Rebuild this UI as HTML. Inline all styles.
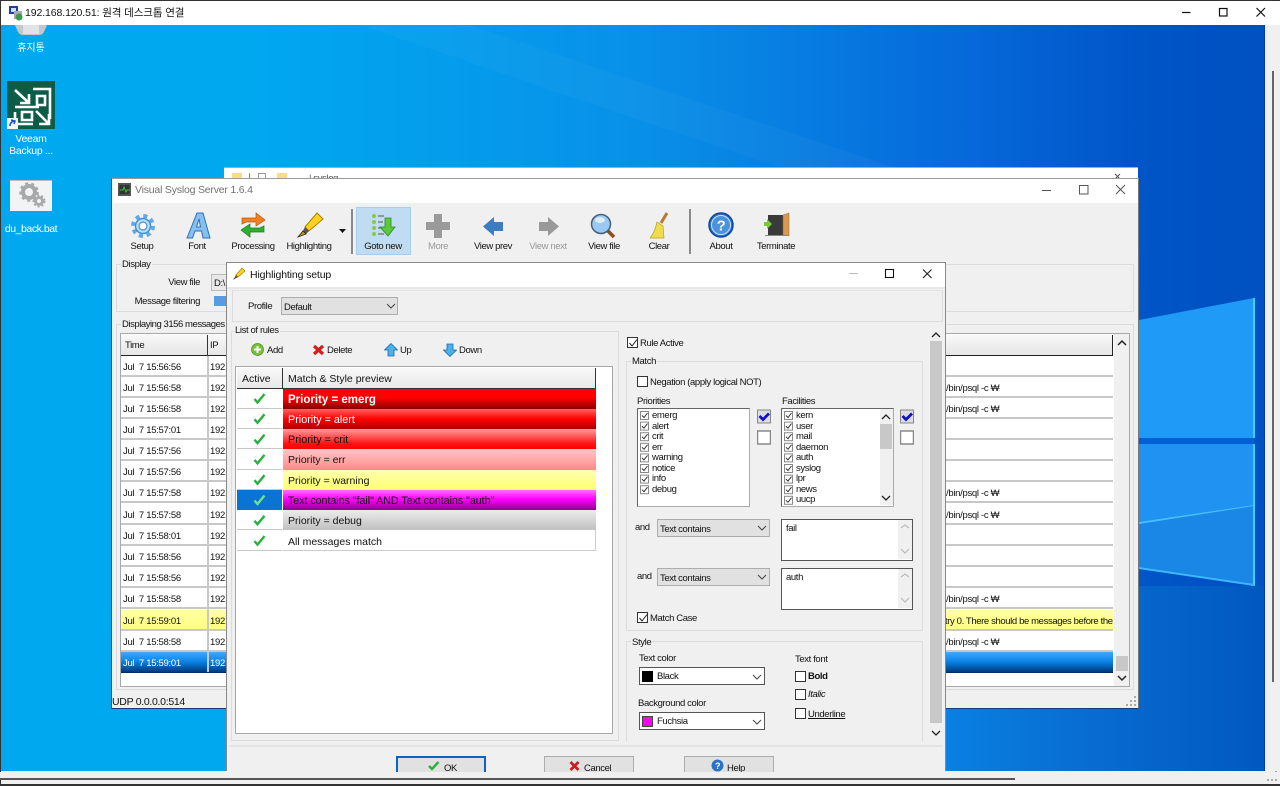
<!DOCTYPE html>
<html><head><meta charset="utf-8"><style>
html,body{margin:0;padding:0;width:1280px;height:786px;overflow:hidden;background:#0880e0}
body{position:relative;font:9.5px/12px "Liberation Sans","Noto Sans CJK KR",sans-serif;letter-spacing:-.38px;color:#111}
div,svg{position:absolute;box-sizing:border-box}
.t{position:absolute;white-space:nowrap;height:12px;margin-top:2px}
.c{transform:translateX(-50%)}
.g{border:1px solid #dcdcdc}
.lb{position:absolute;background:#f0f0f0;padding:0 1px;white-space:nowrap;height:12px}
.r{left:121px;width:992px;height:21.1px;background:#fff;border-bottom:2px solid #c8c8c8;letter-spacing:-.3px}
.cb{width:11px;height:11px;border:1px solid #333;background:#fff}
.sel{background:#e1e1e1;border:1px solid #adadad}
.rr{left:283px;width:313px;height:20.3px;padding:5px 0 0 5px;font-size:10.5px;white-space:nowrap;line-height:12px;letter-spacing:0}
.ch{width:45px;left:237px;height:20.3px;background:#fff;border-bottom:1px solid #c8c8c8}
.btn{top:756px;width:90px;height:16px;background:#e1e1e1;border:1px solid #adadad;border-bottom:0}
</style></head><body>

<svg style="left:0;top:0" width="1280" height="786">
<defs><linearGradient id="bg" x1="0" y1="0" x2="1" y2="0"><stop offset="0" stop-color="#00a8f0"/><stop offset=".2" stop-color="#00a8f0"/><stop offset=".5" stop-color="#0890e8"/><stop offset=".76" stop-color="#0668da"/><stop offset=".9" stop-color="#0054c6"/><stop offset="1" stop-color="#0050c0"/></linearGradient>
<linearGradient id="bg3" x1="0" y1="0" x2="1" y2="0"><stop offset="0" stop-color="#0a80e2"/><stop offset=".6" stop-color="#0666cc"/><stop offset="1" stop-color="#0058c0"/></linearGradient></defs>
<rect width="1280" height="786" fill="url(#bg)"/>
<rect x="946" y="586" width="320" height="190" fill="url(#bg3)"/>
<polygon points="360,25 470,25 1140,250 1140,290" fill="#fff" opacity=".03"/>
<polygon points="1139,320 1254,298 1254,438 1139,438" fill="#1f9af6"/>
<polygon points="1139,444 1254,444 1254,505 1139,522" fill="#1f92f2"/>
<polygon points="1139,522 1254,505 1254,585 1139,568" fill="#1a86e6"/>
<polygon points="1139,522 1254,505 1254,506 1139,524" fill="#48c0ff"/>
<polygon points="1139,438 1254,438 1254,444 1139,444" fill="#0060d4"/>
<rect x="1253" y="298" width="2" height="140" fill="#3cd0ff"/>
<rect x="1253" y="444" width="2" height="142" fill="#3cd0ff"/>
<polygon points="1139,567 1254,584 1254,586 1139,569" fill="#3cb8ff"/>
</svg>

<!-- remote desktop chrome -->
<div style="left:0;top:0;width:1280px;height:25px;background:#fff;border-top:1px solid #333"></div>
<svg style="left:8px;top:5px" width="16" height="16"><rect x="1" y="1" width="9" height="8" fill="#1c3fa8"/><rect x="3" y="3" width="5" height="4" fill="#cfe0ff"/><rect x="6" y="6" width="8" height="8" fill="#aab" /><circle cx="11" cy="12" r="3.5" fill="#3a9a4a"/></svg>
<div class="t" style="left:25px;top:5px;font-size:10.5px;letter-spacing:-.1px">192.168.120.51: 원격 데스크톱 연결</div>
<svg style="left:1170px;top:4px" width="110" height="18" fill="none" stroke="#111" stroke-width="1.2"><path d="M12 8.500h8.500"/><rect x="49.500" y="4.500" width="7.500" height="7.500"/><path d="M86.500 4l8.500 8.500M95 4l-8.500 8.500"/></svg>
<div style="left:1265px;top:25px;width:15px;height:761px;background:#f0f0f0"></div>
<div style="left:1272px;top:71px;width:1.500px;height:611px;background:#666"></div>
<div style="left:0;top:771px;width:1280px;height:13px;background:#f0f0f0"></div>
<div style="left:0;top:784px;width:1280px;height:2px;background:#333"></div>
<div style="left:0;top:0;width:1px;height:786px;background:#333"></div>
<div style="left:1264px;top:25px;width:1px;height:746px;background:#0038b0"></div>

<!-- desktop icons -->
<svg style="left:14px;top:25px" width="34" height="12"><path d="M1 0h32l-3 7q-1 2-4 3H8q-3-1-4-3z" fill="#c4c8ce"/><path d="M9 0h16v9H9z" fill="#dfe2e6"/></svg>
<div class="t c" style="left:31px;top:41px;color:#fff;font-size:10px;letter-spacing:0">휴지통</div>
<svg style="left:7px;top:81px" width="49" height="49"><rect width="48" height="48" fill="#0d5c48"/><g fill="none" stroke="#fff" stroke-width="2.600"><path d="M8 9l14 13M22 13v9h-9"/><path d="M26 8h17v30"/><path d="M30 15h8v9h-8z"/><path d="M8 26h24"/><path d="M15 31h10v8H15z" /><path d="M8 31v12h18"/><path d="M29 30l13 13M42 33v10H32"/></g><rect x="0" y="37" width="11" height="11" fill="#f4f4f4"/><path d="M3 45q0-4 4-5M4 39l4 1-1 3" stroke="#1a50c0" fill="none" stroke-width="1.500"/></svg>
<div class="t c" style="left:31px;top:130.500px;color:#fff;font-size:10.5px;letter-spacing:-.3px">Veeam</div>
<div class="t c" style="left:31px;top:142.500px;color:#fff;font-size:10.5px;letter-spacing:-.3px">Backup ...</div>
<svg style="left:10px;top:180px" width="43" height="32"><rect width="42" height="31" fill="#f2f3f4"/><rect width="42" height="1" fill="#bbb"/><circle cx="19" cy="12" r="6" fill="none" stroke="#a8a8a8" stroke-width="4"/><circle cx="19" cy="12" r="8.500" fill="none" stroke="#a8a8a8" stroke-width="2.500" stroke-dasharray="3 3"/><circle cx="29" cy="21" r="3.500" fill="none" stroke="#aaa" stroke-width="3"/><circle cx="29" cy="21" r="5.500" fill="none" stroke="#aaa" stroke-width="2" stroke-dasharray="2 2"/></svg>
<div class="t c" style="left:31px;top:221px;color:#fff;font-size:10.5px;letter-spacing:-.45px">du_back.bat</div>

<!-- window behind -->
<div style="left:224px;top:167px;width:914px;height:12px;background:#fff;border-top:1px solid #aaa;overflow:hidden">
<div style="left:8px;top:5px;width:10px;height:9px;background:#f6dc8c"></div><div style="left:25px;top:5px;width:1px;height:9px;background:#888"></div><div style="left:34px;top:5px;width:8px;height:9px;border:1px solid #999"></div><div style="left:53px;top:5px;width:10px;height:9px;background:#f6dc8c"></div>
<div class="t" style="left:85px;top:3px;color:#555">| syslog</div></div>
<svg style="left:1113px;top:172px" width="12" height="7" stroke="#555" fill="none"><path d="M2 2l5 5M7 2L2 7"/></svg>

<!-- main window -->
<div style="left:111px;top:178px;width:1028px;height:531px;background:#f0f0f0;border:1px solid #9a9a9a;border-color:#9a9a9a #777 #1a3a80 #2a5a80"></div>
<div style="left:112px;top:179px;width:1026px;height:24px;background:#fff"></div>
<svg style="left:118px;top:183px" width="13" height="13"><rect width="13" height="13" fill="#555"/><rect x="1.500" y="2" width="10" height="9" fill="#333"/><path d="M2 7h3l1-3 2 5 1-2h3" stroke="#3c3" fill="none"/></svg>
<div class="t" style="left:135px;top:182px;color:#707070;font-size:10.5px;letter-spacing:-.2px">Visual Syslog Server 1.6.4</div>
<svg style="left:1040px;top:184px" width="95" height="12" fill="none" stroke="#555"><path d="M2 6.500h9"/><rect x="39.500" y="1.500" width="8.500" height="8.500"/><path d="M76 1l9 9M85 1l-9 9"/></svg>

<!-- toolbar -->
<div style="left:356px;top:207px;width:55px;height:48px;background:#c0dcf3;border:1px solid #a6cdee"></div>
<div style="left:351px;top:209px;width:1.500px;height:45px;background:#8a8a8a"></div>
<div style="left:689px;top:209px;width:1.500px;height:45px;background:#8a8a8a"></div>
<svg style="left:130px;top:213px" width="26" height="26"><circle cx="13" cy="13" r="7.500" fill="#bfe0fb" stroke="#3e8fd8" stroke-width="1.500"/><circle cx="13" cy="13" r="10" fill="none" stroke="#60a8e8" stroke-width="4" stroke-dasharray="4 3.850"/><circle cx="13" cy="13" r="4" fill="#fff" stroke="#3e8fd8" stroke-width="1.200"/></svg>
<svg style="left:186px;top:212px" width="25" height="27"><path d="M1 26L11 1h6l7 25h-7l-1.500-7H9l-2.500 7z M10.500 15h4L13 7z" fill="#86c0f0" fill-rule="evenodd" stroke="#2c72b8"/></svg>
<svg style="left:240px;top:212px" width="26" height="26"><path d="M2 12V6h14V1l9 7-9 6V10H6z" fill="#f08020" stroke="#b85a10" stroke-width=".7"/><path d="M24 14v6H10v5l-9-7 9-6v4h10z" fill="#2cb030" stroke="#1a7a20" stroke-width=".7"/></svg>
<svg style="left:296px;top:212px" width="28" height="27"><path d="M9 15L21 1l6 6-14 12z" fill="#ffd21e" stroke="#a88000"/><path d="M9 15l4 4-3 3-3-3z" fill="#555"/><path d="M7 19l3 3-8 3z" fill="#c89a10" stroke="#222" stroke-width=".8"/></svg>
<svg style="left:339px;top:229px" width="8" height="5"><path d="M0 0h7L3.500 4z" fill="#111"/></svg>
<svg style="left:371px;top:213px" width="26" height="26"><g fill="#8cc850"><circle cx="3" cy="3" r="2"/><circle cx="3" cy="9" r="2"/><circle cx="3" cy="15" r="2"/><circle cx="3" cy="21" r="2"/></g><path d="M7 3h6M7 9h5M7 15h4M7 21h6" stroke="#555"/><path d="M14 5h6v9h4l-7 9-8-9h5z" fill="#5cc83c" stroke="#2a8a20" stroke-width=".8"/></svg>
<svg style="left:425px;top:213px" width="26" height="26"><path d="M9 1h8v8h8v8h-8v8H9v-8H1V9h8z" fill="#9a9a9a"/></svg>
<svg style="left:483px;top:217px" width="21" height="20"><path d="M0 9.500L11 0v5h9v9h-9v5z" fill="#3c7cc0"/></svg>
<svg style="left:539px;top:217px" width="21" height="20"><path d="M20 9.500L9 0v5H0v9h9v5z" fill="#999"/></svg>
<svg style="left:590px;top:213px" width="28" height="26"><path d="M17 17l7 7" stroke="#8a5020" stroke-width="3.500"/><circle cx="11" cy="11" r="9.500" fill="#9cc8f4" stroke="#44607a" stroke-width="1.500"/><ellipse cx="10" cy="7" rx="5" ry="3" fill="#dcecfc"/></svg>
<svg style="left:648px;top:212px" width="22" height="27"><path d="M19 1l-6 10" stroke="#b87830" stroke-width="3"/><path d="M9 10l6 4 1 12H2q5-6 7-16z" fill="#f0dc50" stroke="#b8a020" stroke-width=".7"/></svg>
<svg style="left:708px;top:212px" width="26" height="26"><circle cx="13" cy="13" r="12" fill="#2a72c8" stroke="#0e4a98" stroke-width="1.500"/><circle cx="13" cy="13" r="9.500" fill="#4a92dc" stroke="#cfe4f8"/><text x="13" y="18.500" font-size="15" font-weight="bold" font-family="Liberation Sans" fill="#fff" text-anchor="middle">?</text></svg>
<svg style="left:764px;top:212px" width="26" height="26"><rect x="4" y="3" width="19" height="20" fill="#3a3a3a"/><path d="M19 3l6-2v23l-6-1z" fill="#d89850" stroke="#9a6a30" stroke-width=".5"/><rect x="1" y="23" width="22" height="1" fill="#888"/><path d="M0 10h3V7l5 5-5 5v-3H0z" fill="#7ccc30"/></svg>

<div class="t c" style="left:142px;top:239px">Setup</div>
<div class="t c" style="left:197px;top:239px">Font</div>
<div class="t c" style="left:253px;top:239px">Processing</div>
<div class="t c" style="left:309px;top:239px">Highlighting</div>
<div class="t c" style="left:383px;top:239px">Goto new</div>
<div class="t c" style="left:438px;top:239px;color:#999">More</div>
<div class="t c" style="left:493px;top:239px">View prev</div>
<div class="t c" style="left:548px;top:239px;color:#999">View next</div>
<div class="t c" style="left:604px;top:239px">View file</div>
<div class="t c" style="left:659px;top:239px">Clear</div>
<div class="t c" style="left:721px;top:239px">About</div>
<div class="t c" style="left:776px;top:239px">Terminate</div>

<!-- display group -->
<div class="g" style="left:116px;top:264px;width:1018px;height:48px"></div>
<div class="lb" style="left:121px;top:258.500px">Display</div>
<div class="t" style="right:1080px;top:275px">View file</div>
<div class="t" style="right:1080px;top:294px">Message filtering</div>
<div style="left:211px;top:274px;width:30px;height:17px;background:#e8e8e8;border:1px solid #bbb;padding:3px 0 0 2px">D:\</div>
<div style="left:214px;top:296px;width:12px;height:10px;background:#5a9ae0"></div>

<!-- messages group -->
<div class="g" style="left:116px;top:324px;width:1018px;height:366px"></div>
<div class="lb" style="left:121px;top:318.500px;letter-spacing:-.45px">Displaying 3156 messages</div>
<div style="left:120px;top:333px;width:1010px;height:354px;background:#fff;border:1px solid #a8a8a8"></div>
<div style="left:121px;top:335px;width:992px;height:21px;background:linear-gradient(#f8f8f8,#e6e6e6);border-bottom:1.500px solid #222;border-right:1px solid #222"></div>
<div style="left:207px;top:335px;width:1px;height:21px;background:#333"></div>
<div class="t" style="left:125px;top:338px">Time</div>
<div class="t" style="left:210px;top:338px">IP</div>
<div style="left:1114px;top:334px;width:15px;height:352px;background:#f0f0f0"></div>
<div style="left:1116px;top:656px;width:12px;height:15px;background:#c8c8c8"></div>
<svg style="left:1116px;top:339px" width="12" height="8"><path d="M2 6l4-4 4 4" fill="none" stroke="#222" stroke-width="1.500"/></svg>
<svg style="left:1116px;top:674px" width="12" height="8"><path d="M2 2l4 4 4-4" fill="none" stroke="#222" stroke-width="1.500"/></svg>

<div class="r" style="top:356px"><div class="t" style="left:2px;top:4px">Jul&nbsp; 7 15:56:56</div><div class="t" style="left:89px;top:4px">192.</div></div>
<div class="r" style="top:377px"><div class="t" style="left:2px;top:4px">Jul&nbsp; 7 15:56:58</div><div class="t" style="left:89px;top:4px">192.</div><div class="t" style="left:825px;top:4px">/bin/psql -c ₩</div></div>
<div class="r" style="top:398px"><div class="t" style="left:2px;top:4px">Jul&nbsp; 7 15:56:58</div><div class="t" style="left:89px;top:4px">192.</div><div class="t" style="left:825px;top:4px">/bin/psql -c ₩</div></div>
<div class="r" style="top:419px"><div class="t" style="left:2px;top:4px">Jul&nbsp; 7 15:57:01</div><div class="t" style="left:89px;top:4px">192.</div></div>
<div class="r" style="top:440px"><div class="t" style="left:2px;top:4px">Jul&nbsp; 7 15:57:56</div><div class="t" style="left:89px;top:4px">192.</div></div>
<div class="r" style="top:461px"><div class="t" style="left:2px;top:4px">Jul&nbsp; 7 15:57:56</div><div class="t" style="left:89px;top:4px">192.</div></div>
<div class="r" style="top:482px"><div class="t" style="left:2px;top:4px">Jul&nbsp; 7 15:57:58</div><div class="t" style="left:89px;top:4px">192.</div><div class="t" style="left:825px;top:4px">/bin/psql -c ₩</div></div>
<div class="r" style="top:503.500px"><div class="t" style="left:2px;top:4px">Jul&nbsp; 7 15:57:58</div><div class="t" style="left:89px;top:4px">192.</div><div class="t" style="left:825px;top:4px">/bin/psql -c ₩</div></div>
<div class="r" style="top:525px"><div class="t" style="left:2px;top:4px">Jul&nbsp; 7 15:58:01</div><div class="t" style="left:89px;top:4px">192.</div></div>
<div class="r" style="top:546px"><div class="t" style="left:2px;top:4px">Jul&nbsp; 7 15:58:56</div><div class="t" style="left:89px;top:4px">192.</div></div>
<div class="r" style="top:567px"><div class="t" style="left:2px;top:4px">Jul&nbsp; 7 15:58:56</div><div class="t" style="left:89px;top:4px">192.</div></div>
<div class="r" style="top:588px"><div class="t" style="left:2px;top:4px">Jul&nbsp; 7 15:58:58</div><div class="t" style="left:89px;top:4px">192.</div><div class="t" style="left:825px;top:4px">/bin/psql -c ₩</div></div>
<div class="r" style="top:609.500px;background:linear-gradient(#ffffa8,#ffff80);overflow:hidden"><div class="t" style="left:2px;top:4px">Jul&nbsp; 7 15:59:01</div><div class="t" style="left:89px;top:4px">192.</div><div class="t" style="left:824px;top:4px;letter-spacing:-.38px">try 0. There should be messages before the</div></div>
<div class="r" style="top:630.500px"><div class="t" style="left:2px;top:4px">Jul&nbsp; 7 15:58:58</div><div class="t" style="left:89px;top:4px">192.</div><div class="t" style="left:825px;top:4px">/bin/psql -c ₩</div></div>
<div class="r" style="top:652px;height:20.500px;border:0;background:linear-gradient(#42a8ff,#0a84e8 45%,#003a7c 95%,#002050);color:#fff"><div class="t" style="left:2px;top:3.500px">Jul&nbsp; 7 15:59:01</div><div class="t" style="left:89px;top:3.500px">192.</div></div>
<div style="left:207px;top:356px;width:1.500px;height:316px;background:#c8c8c8"></div>
<div class="t" style="left:112px;top:694px;font-size:10.5px;letter-spacing:-.3px">UDP 0.0.0.0:514</div>
<svg style="left:1126px;top:696px" width="11" height="11" fill="#aaa"><rect x="8" y="0" width="2" height="2"/><rect x="4" y="4" width="2" height="2"/><rect x="8" y="4" width="2" height="2"/><rect x="0" y="8" width="2" height="2"/><rect x="4" y="8" width="2" height="2"/><rect x="8" y="8" width="2" height="2"/></svg>
<svg style="left:1267px;top:771px" width="12" height="12" fill="#aaa"><rect x="8" y="0" width="2" height="2"/><rect x="4" y="4" width="2" height="2"/><rect x="8" y="4" width="2" height="2"/><rect x="0" y="8" width="2" height="2"/><rect x="4" y="8" width="2" height="2"/><rect x="8" y="8" width="2" height="2"/></svg>

<!-- dialog -->
<div style="left:226px;top:262px;width:720px;height:509px;background:#f0f0f0;border:1px solid #888;border-bottom:0"></div>
<div style="left:227px;top:263px;width:718px;height:24px;background:#fff"></div>
<div style="left:227px;top:287px;width:718px;height:2px;background:#e8e8e8"></div>
<svg style="left:232px;top:267px" width="14" height="14"><path d="M4 8l6-7 3 3-7 6z" fill="#ffd21e" stroke="#a88000" stroke-width=".7"/><path d="M4 8l2 2-5 3z" fill="#6a5010"/></svg>
<div class="t" style="left:250px;top:267px;font-size:10.5px;letter-spacing:-.13px">Highlighting setup</div>
<svg style="left:846px;top:268px" width="90" height="12" fill="none"><path d="M3 5.500h9" stroke="#bbb"/><rect x="39.500" y="1.500" width="8" height="8" stroke="#111" stroke-width="1.100"/><path d="M77 1.500l8.500 8.500M85.500 1.500L77 10" stroke="#222" stroke-width="1.100"/></svg>

<div style="left:232px;top:290px;width:711px;height:32px;border:1px solid #dcdcdc;border-top-color:#e4e4e4"></div>
<div class="t" style="left:248px;top:299px">Profile</div>
<div class="sel" style="left:281px;top:297px;width:117px;height:18px;padding:4px 0 0 2px">Default</div>
<svg style="left:386px;top:303px" width="10" height="7"><path d="M1 1l4 4 4-4" fill="none" stroke="#444"/></svg>

<div class="g" style="left:231px;top:331px;width:388px;height:410px"></div>
<div class="lb" style="left:234px;top:325px">List of rules</div>
<svg style="left:251px;top:343px" width="13" height="13"><circle cx="6.500" cy="6.500" r="6" fill="#78c038" stroke="#4a9020" stroke-width=".7"/><path d="M6.500 3v7M3 6.500h7" stroke="#fff" stroke-width="2"/></svg>
<div class="t" style="left:267px;top:343px">Add</div>
<svg style="left:312px;top:344px" width="13" height="12"><path d="M2 2l9 8M11 2l-9 8" stroke="#d02020" stroke-width="3.200"/></svg>
<div class="t" style="left:327px;top:343px">Delete</div>
<svg style="left:384px;top:343px" width="14" height="14"><path d="M7 .5L13.500 7H10v6H4V7H.5z" fill="#4cb0ec" stroke="#1a6aa8" stroke-width=".8"/></svg>
<div class="t" style="left:400px;top:343px">Up</div>
<svg style="left:443px;top:343px" width="14" height="14"><path d="M7 13.500L13.500 7H10V1H4v6H.5z" fill="#4cb0ec" stroke="#1a6aa8" stroke-width=".8"/></svg>
<div class="t" style="left:459px;top:343px">Down</div>

<div style="left:235px;top:366px;width:378px;height:368px;background:#fff;border:1px solid #a8a8a8"></div>
<div style="left:237px;top:368px;width:359px;height:20.500px;background:linear-gradient(#f8f8f8,#e8e8e8);border-bottom:1.500px solid #333;border-right:1px solid #333"></div>
<div style="left:282px;top:368px;width:1px;height:20px;background:#333"></div>
<div class="t" style="left:242px;top:371px;font-size:10.5px;letter-spacing:0">Active</div>
<div class="t" style="left:288px;top:371px;font-size:10.5px;letter-spacing:0">Match &amp; Style preview</div>

<div class="ch" style="top:388.500px"></div><div class="ch" style="top:408.800px"></div><div class="ch" style="top:429px"></div><div class="ch" style="top:449.300px"></div><div class="ch" style="top:469.500px"></div>
<div class="ch" style="top:489.800px;background:#0a74d4;border:0"></div><div class="ch" style="top:510px"></div><div class="ch" style="top:530.300px"></div>
<div class="rr" style="top:388.500px;background:linear-gradient(#f00,#f00 45%,#880000);color:#fff;font-weight:bold;font-size:11.5px">Priority = emerg</div>
<div class="rr" style="top:408.800px;background:linear-gradient(#ff6060,#f00 50%,#b00000);color:#fff;font-size:10.8px">Priority = alert</div>
<div class="rr" style="top:429px;background:linear-gradient(#ff9c9c,#ff1010 75%,#f00);font-size:10.8px">Priority = crit</div>
<div class="rr" style="top:449.300px;background:linear-gradient(#ffc8c8,#ff8888)">Priority = err</div>
<div class="rr" style="top:469.500px;background:linear-gradient(#ffffb0,#ffff70)">Priority = warning</div>
<div class="rr" style="top:489.800px;background:linear-gradient(#ff70ff,#f0f 45%,#900090);font-size:10.6px">Text contains "fail" AND Text contains "auth"</div>
<div class="rr" style="top:510px;background:linear-gradient(#ececec,#c0c0c0)">Priority = debug</div>
<div class="rr" style="top:530.300px;background:#fff;border:1px solid #ccc;border-width:0 1px 1px 0;height:21px;padding-top:5.500px">All messages match</div>

<svg style="left:253px;top:392px" width="13" height="160" fill="none" stroke="#28b040" stroke-width="2.400"><path d="M1.500 7l3 3.500L11.500 2"/><path transform="translate(0 20.300)" d="M1.500 7l3 3.500L11.500 2"/><path transform="translate(0 40.600)" d="M1.500 7l3 3.500L11.500 2"/><path transform="translate(0 60.900)" d="M1.500 7l3 3.500L11.500 2"/><path transform="translate(0 81.200)" d="M1.500 7l3 3.500L11.500 2"/><path transform="translate(0 101.500)" d="M1.500 7l3 3.500L11.500 2" stroke="#70e090"/><path transform="translate(0 121.800)" d="M1.500 7l3 3.500L11.500 2"/><path transform="translate(0 142.100)" d="M1.500 7l3 3.500L11.500 2"/></svg>

<!-- right panel -->
<div class="cb" style="left:627px;top:337px"></div>
<svg style="left:628px;top:338px" width="10" height="10"><path d="M1.500 5l2.500 3 5-6.500" fill="none" stroke="#222"/></svg>
<div class="t" style="left:640px;top:336px">Rule Active</div>

<div class="g" style="left:626px;top:361px;width:297px;height:270px"></div>
<div class="lb" style="left:631px;top:355.500px">Match</div>
<div class="cb" style="left:637px;top:376px"></div>
<div class="t" style="left:650px;top:375px">Negation (apply logical NOT)</div>
<div class="t" style="left:637px;top:394px">Priorities</div>
<div class="t" style="left:782px;top:394px">Facilities</div>

<div style="left:637px;top:408px;width:113px;height:99px;background:#fff;border:1px solid #444;border-color:#666 #aaa #aaa #666"></div>
<div style="left:781px;top:408px;width:113px;height:99px;background:#fff;border:1px solid #666;border-color:#666 #aaa #aaa #666"></div>

<svg style="left:639px;top:410px" width="12" height="96" fill="none" stroke="#333"><g id="k"><rect x="1.500" y="1.500" width="8" height="8" stroke="#888" fill="#fff"/><path d="M3 5.500l2 2 3.500-4.500"/></g><use href="#k" y="10.600"/><use href="#k" y="21.200"/><use href="#k" y="31.800"/><use href="#k" y="42.400"/><use href="#k" y="53"/><use href="#k" y="63.600"/><use href="#k" y="74.200"/></svg>
<svg style="left:783px;top:410px" width="12" height="96" fill="none" stroke="#333"><use href="#k"/><use href="#k" y="10.600"/><use href="#k" y="21.200"/><use href="#k" y="31.800"/><use href="#k" y="42.400"/><use href="#k" y="53"/><use href="#k" y="63.600"/><use href="#k" y="74.200"/><use href="#k" y="84.800"/></svg>
<div class="t" style="left:652px;top:408px">emerg</div><div class="t" style="left:652px;top:418.500px">alert</div><div class="t" style="left:652px;top:429px">crit</div><div class="t" style="left:652px;top:439.500px">err</div><div class="t" style="left:652px;top:450px">warning</div><div class="t" style="left:652px;top:460.500px">notice</div><div class="t" style="left:652px;top:471px">info</div><div class="t" style="left:652px;top:481.500px">debug</div>
<div class="t" style="left:796px;top:408px">kern</div><div class="t" style="left:796px;top:418.500px">user</div><div class="t" style="left:796px;top:429px">mail</div><div class="t" style="left:796px;top:439.500px">daemon</div><div class="t" style="left:796px;top:450px">auth</div><div class="t" style="left:796px;top:460.500px">syslog</div><div class="t" style="left:796px;top:471px">lpr</div><div class="t" style="left:796px;top:481.500px">news</div><div class="t" style="left:796px;top:492px;height:11px;overflow:hidden">uucp</div>
<div style="left:880px;top:409px;width:13px;height:96px;background:#f0f0f0"></div>
<div style="left:880px;top:424px;width:12px;height:25px;background:#c8c8c8"></div>
<svg style="left:880px;top:413px" width="12" height="8"><path d="M2 6l4-4 4 4" fill="none" stroke="#222" stroke-width="1.300"/></svg>
<svg style="left:880px;top:494px" width="12" height="8"><path d="M2 2l4 4 4-4" fill="none" stroke="#222" stroke-width="1.300"/></svg>

<svg style="left:757px;top:409px" width="14" height="36"><rect x=".5" y="1" width="13" height="13" fill="#ddd" stroke="#888"/><path d="M2.500 7l3.500 3.500 6-6" fill="none" stroke="#1010d0" stroke-width="2.800"/><rect x=".5" y="22" width="13" height="13" fill="#fff" stroke="#888" stroke-width="1.500"/></svg>
<svg style="left:900px;top:409px" width="14" height="36"><rect x=".5" y="1" width="13" height="13" fill="#ddd" stroke="#888"/><path d="M2.500 7l3.500 3.500 6-6" fill="none" stroke="#1010d0" stroke-width="2.800"/><rect x=".5" y="22" width="13" height="13" fill="#fff" stroke="#888" stroke-width="1.500"/></svg>

<div class="t" style="left:635px;top:520px">and</div>
<div class="sel" style="left:657px;top:519px;width:113px;height:18px;padding:4px 0 0 2px">Text contains</div>
<svg style="left:757px;top:525px" width="10" height="7"><path d="M1 1l4 4 4-4" fill="none" stroke="#444"/></svg>
<div style="left:781px;top:519px;width:132px;height:42px;background:#fff;border:1px solid #555;padding:3px 0 0 4px">fail</div>
<div style="left:898px;top:520px;width:14px;height:39px;background:#f0f0f0"></div>
<svg style="left:899px;top:523px" width="12" height="34" fill="none" stroke="#bbb" stroke-width="1.200"><path d="M2 5l4-3 4 3M2 26l4 4 4-4"/></svg>

<div class="t" style="left:637px;top:569px">and</div>
<div class="sel" style="left:657px;top:568px;width:113px;height:18px;padding:4px 0 0 2px">Text contains</div>
<svg style="left:757px;top:574px" width="10" height="7"><path d="M1 1l4 4 4-4" fill="none" stroke="#444"/></svg>
<div style="left:781px;top:568px;width:132px;height:42px;background:#fff;border:1px solid #555;padding:3px 0 0 4px">auth</div>
<div style="left:898px;top:569px;width:14px;height:39px;background:#f0f0f0"></div>
<svg style="left:899px;top:572px" width="12" height="34" fill="none" stroke="#bbb" stroke-width="1.200"><path d="M2 5l4-3 4 3M2 26l4 4 4-4"/></svg>

<div class="cb" style="left:637px;top:612px"></div>
<svg style="left:638px;top:613px" width="10" height="10"><path d="M1.500 5l2.500 3 5-6.500" fill="none" stroke="#222"/></svg>
<div class="t" style="left:650px;top:611px">Match Case</div>

<div class="g" style="left:626px;top:641px;width:297px;height:100px;border-bottom:0"></div>
<div class="lb" style="left:631px;top:636.500px">Style</div>
<div class="t" style="left:639px;top:651px">Text color</div>
<div style="left:639px;top:667px;width:126px;height:18px;background:#fff;border:1px solid #555;padding:3px 0 0 17px">Black</div>
<div style="left:642px;top:671px;width:11px;height:11px;background:#000"></div>
<svg style="left:752px;top:674px" width="10" height="7"><path d="M1 1l4 4 4-4" fill="none" stroke="#444"/></svg>
<div class="t" style="left:638px;top:696px">Background color</div>
<div style="left:639px;top:712px;width:126px;height:18px;background:#fff;border:1px solid #555;padding:3px 0 0 17px">Fuchsia</div>
<div style="left:642px;top:716px;width:11px;height:11px;background:#f0f;border:1px solid #444"></div>
<svg style="left:752px;top:719px" width="10" height="7"><path d="M1 1l4 4 4-4" fill="none" stroke="#444"/></svg>
<div class="t" style="left:795px;top:652px">Text font</div>
<div class="cb" style="left:795px;top:671px"></div><div class="t" style="left:808px;top:669px;font-weight:bold">Bold</div>
<div class="cb" style="left:795px;top:689px"></div><div class="t" style="left:808px;top:687px;font-style:italic">Italic</div>
<div class="cb" style="left:795px;top:708px"></div><div class="t" style="left:808px;top:707px;text-decoration:underline">Underline</div>

<div style="left:930px;top:330px;width:13px;height:411px;background:#f0f0f0"></div>
<div style="left:930px;top:341px;width:12px;height:382px;background:#c8c8c8"></div>
<svg style="left:930px;top:331px" width="12" height="8"><path d="M2 6l4-4 4 4" fill="none" stroke="#222" stroke-width="1.300"/></svg>
<svg style="left:930px;top:729px" width="12" height="8"><path d="M2 2l4 4 4-4" fill="none" stroke="#222" stroke-width="1.300"/></svg>

<div style="left:229px;top:745px;width:714px;height:2px;background:#e4e4e4"></div>
<div class="btn" style="left:396px;border:2px solid #0a64c8;border-bottom:0"></div>
<div class="btn" style="left:544px"></div>
<div class="btn" style="left:684px"></div>
<svg style="left:428px;top:761px" width="12" height="10" fill="none" stroke="#28b040" stroke-width="2.400"><path d="M1 5l3 3 6.500-7"/></svg>
<div class="t" style="left:444px;top:761px">OK</div>
<svg style="left:569px;top:761px" width="11" height="10"><path d="M1.500 1l8 8M9.500 1l-8 8" stroke="#c82020" stroke-width="2.800"/></svg>
<div class="t" style="left:584px;top:761px">Cancel</div>
<svg style="left:711px;top:759px" width="13" height="13"><circle cx="6.500" cy="6.500" r="6" fill="#2a72c8"/><text x="6.500" y="10" font-size="9" font-weight="bold" font-family="Liberation Sans" fill="#fff" text-anchor="middle">?</text></svg>
<div class="t" style="left:727px;top:761px">Help</div>

<!-- clip bottom -->
<div style="left:0;top:771.500px;width:1280px;height:7px;background:#f0f0f0"></div>
<div style="left:0;top:778px;width:1015px;height:1.500px;background:#555"></div>
</body></html>
